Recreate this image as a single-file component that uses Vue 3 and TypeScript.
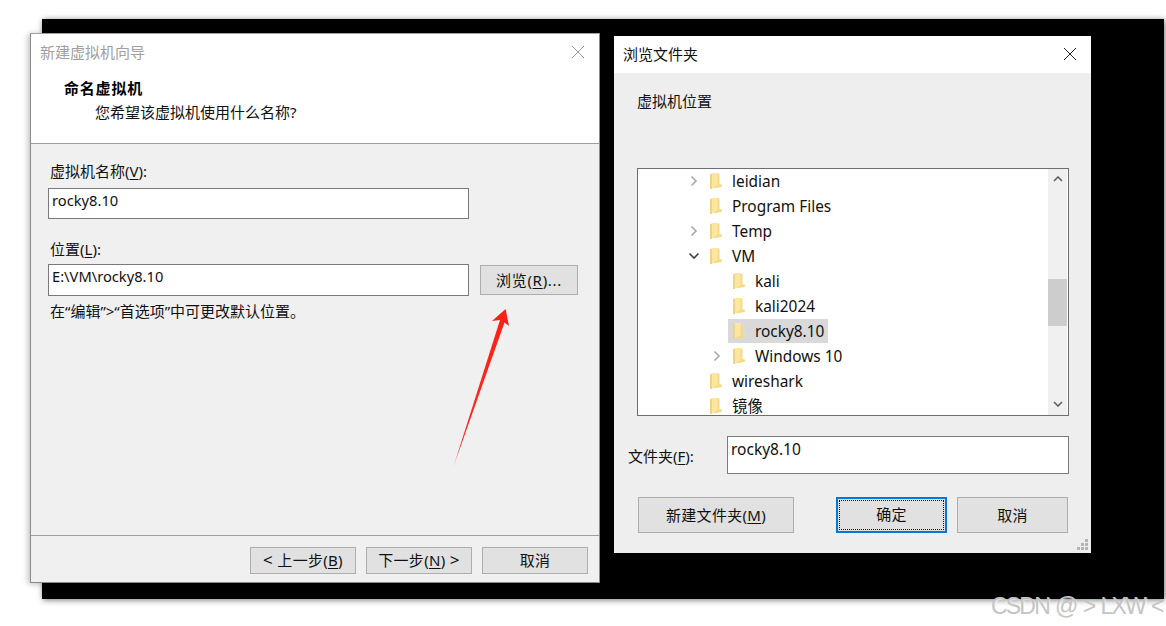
<script setup lang="ts">
interface Row { label: string; level: number; arrow?: 'right' | 'down'; selected?: boolean }
const rows: Row[] = [
  { label: 'leidian', level: 0, arrow: 'right' },
  { label: 'Program Files', level: 0 },
  { label: 'Temp', level: 0, arrow: 'right' },
  { label: 'VM', level: 0, arrow: 'down' },
  { label: 'kali', level: 1 },
  { label: 'kali2024', level: 1 },
  { label: 'rocky8.10', level: 1, selected: true },
  { label: 'Windows 10', level: 1, arrow: 'right' },
  { label: 'wireshark', level: 0 },
  { label: '镜像', level: 0 },
]
const indent = (level: number) => ({ paddingLeft: `${48 + level * 23}px` })
</script>

<template>
  <div class="canvas">
    <div class="backdrop"></div>

    <section class="win wizard">
      <header class="wz-head">
        <div class="wz-title">
          <span>新建虚拟机向导</span>
          <svg class="wz-close" width="14" height="14" viewBox="0 0 14 14"><path d="M1 1l12 12M13 1L1 13" stroke="#9a9a9a" fill="none" /></svg>
        </div>
        <h1>命名虚拟机</h1>
        <p>您希望该虚拟机使用什么名称?</p>
      </header>
      <div class="wz-body">
        <label class="wz-label first">虚拟机名称(<u>V</u>):</label>
        <div class="field">rocky8.10</div>
        <label class="wz-label second">位置(<u>L</u>):</label>
        <div class="loc-row">
          <div class="field loc">E:\VM\rocky8.10</div>
          <button class="btn browse">浏览(<u>R</u>)...</button>
        </div>
        <p class="hint">在“编辑”&gt;“首选项”中可更改默认位置。</p>
      </div>
      <footer class="wz-foot">
        <button class="btn"><span class="lt">&lt;</span> 上一步(<u>B</u>)</button>
        <button class="btn">下一步(<u>N</u>) <span class="lt">&gt;</span></button>
        <button class="btn">取消</button>
      </footer>
    </section>

    <section class="win browser">
      <header class="br-head">
        <span>浏览文件夹</span>
        <svg class="br-close" width="14" height="14" viewBox="0 0 14 14"><path d="M1 1l12 12M13 1L1 13" stroke="#222" fill="none" /></svg>
      </header>
      <div class="br-body">
        <p class="br-desc">虚拟机位置</p>
        <div class="tree">
          <ul class="tree-list">
            <li v-for="r in rows" :key="r.label" class="row" :style="indent(r.level)">
              <span class="arrow">
                <svg v-if="r.arrow === 'right'" width="10" height="12" viewBox="0 0 10 12"><path d="M2.5 1.5L7 6l-4.500 4.500" stroke="#a8a8a8" stroke-width="1.6" fill="none" /></svg>
                <svg v-else-if="r.arrow === 'down'" width="12" height="10" viewBox="0 0 12 10"><path d="M1.5 2.500L6 7l4.500-4.500" stroke="#404040" stroke-width="1.6" fill="none" /></svg>
              </span>
              <span class="item" :class="{ selected: r.selected }">
                <svg class="folder" width="13" height="18" viewBox="0 0 13 18">
                  <path d="M1 2.500L3 1.500V17L1 16.500z" fill="#e9c566" />
                  <path d="M2.500 1H9V12.500H13V14.500L2.500 16z" fill="#fbe7a2" />
                  <path d="M8.500 1.500H10.500V12.500H12.500V15L3 16.500L8.500 13z" fill="#f7d984" />
                  <path d="M1 3H2.600V16.500H1z" fill="#f2d27c" />
                </svg>
                <span class="row-label">{{ r.label }}</span>
              </span>
            </li>
          </ul>
          <div class="scrollbar">
            <svg class="sb-arrow" width="10" height="6" viewBox="0 0 10 6"><path d="M1 5l4-4 4 4" stroke="#606060" stroke-width="1.6" fill="none" /></svg>
            <div class="thumb"></div>
            <svg class="sb-arrow down" width="10" height="6" viewBox="0 0 10 6"><path d="M1 1l4 4 4-4" stroke="#606060" stroke-width="1.6" fill="none" /></svg>
          </div>
        </div>
        <div class="folder-row">
          <label>文件夹(<u>F</u>):</label>
          <div class="folder-input">rocky8.10</div>
        </div>
        <div class="br-actions">
          <button class="btn new">新建文件夹(<u>M</u>)</button>
          <button class="btn ok"><span>确定</span></button>
          <button class="btn cancel">取消</button>
        </div>
        <svg class="grip" width="12" height="12" viewBox="0 0 12 12" fill="#b4b4b4">
          <rect x="8" y="0" width="3" height="3" /><rect x="4" y="4" width="3" height="3" /><rect x="8" y="4" width="3" height="3" />
          <rect x="0" y="8" width="3" height="3" /><rect x="4" y="8" width="3" height="3" /><rect x="8" y="8" width="3" height="3" />
        </svg>
      </div>
    </section>

    <svg class="arrow-mark" width="70" height="170" viewBox="0 0 70 170">
      <defs>
        <linearGradient id="tail" x1="0" y1="1" x2="0.8" y2="0">
          <stop offset="0" stop-color="#ff2a1f" stop-opacity="0.4" />
          <stop offset="0.15" stop-color="#ff2a1f" />
          <stop offset="1" stop-color="#ff2015" />
        </linearGradient>
      </defs>
      <path d="M55.600 2L59 19L54.500 15.500L3 161L50 13L42 14z" fill="url(#tail)" />
    </svg>

    <div class="watermark">CSDN @ &gt; LXW &lt;</div>
  </div>
</template>

<style>
html, body { margin: 0; background: #fff; overflow: hidden; }
</style>

<style scoped>
.canvas {
  position: relative;
  width: 1166px;
  height: 626px;
  overflow: hidden;
  background: #fff;
  font-family: "Noto Sans", "Noto Sans CJK SC", sans-serif;
  font-size: 15px;
  color: #111;
}
.backdrop {
  position: absolute;
  left: 42px;
  top: 19px;
  width: 1122px;
  height: 580px;
  background: #000;
  box-shadow: 1px 1px 6px rgba(0, 0, 0, 0.55);
}
.win {
  position: absolute;
  box-sizing: border-box;
  display: flex;
  flex-direction: column;
  background: #f0f0f0;
}
.wizard {
  left: 30px;
  top: 33px;
  width: 570px;
  height: 550px;
  border: 1px solid #8a8a8a;
  border-top-color: #a0a0a0;
  box-shadow: -2px 1px 6px rgba(0, 0, 0, 0.25);
}
.wz-head {
  height: 110px;
  flex: none;
  box-sizing: border-box;
  background: #fff;
  border-bottom: 1px solid #a0a0a0;
}
.wz-title {
  display: flex;
  align-items: center;
  justify-content: space-between;
  height: 36px;
  padding: 0 14px 0 9px;
  color: #a0a0a0;
  line-height: 36px;
}
h1 {
  margin: 6px 0 0 33px;
  font-size: 15px;
  font-weight: 700;
  line-height: 24px;
  letter-spacing: 0.8px;
  color: #000;
}
.wz-head p {
  margin: 0 0 0 64px;
  line-height: 24px;
  color: #111;
}
.wz-body {
  flex: 1;
  padding: 0 20px 0 17px;
}
.wz-label {
  display: block;
  padding-left: 2px;
  line-height: 20px;
  color: #111;
}
.wz-label.first { margin-top: 17px; }
.wz-label.second { margin-top: 20px; }
u { text-underline-offset: 2px; }
.field {
  box-sizing: border-box;
  flex: none;
  width: 421px;
  height: 31px;
  margin-top: 7px;
  padding: 0 3px;
  background: #fff;
  border: 1px solid #7a7a7a;
  font-size: 14.700px;
  line-height: 22px;
  color: #111;
}
.loc-row {
  display: flex;
  align-items: center;
  gap: 11px;
  margin-top: 5px;
}
.loc-row .field { margin-top: 0; }
.field.loc { height: 32px; }
.btn {
  box-sizing: border-box;
  height: 27px;
  padding: 0 0 1px;
  background: #e1e1e1;
  border: 1px solid #adadad;
  font: inherit;
  font-size: 15px;
  line-height: 24px;
  letter-spacing: 0.3px;
  color: #111;
  white-space: nowrap;
}
.browse { width: 98px; height: 30px; padding: 0; letter-spacing: 0.7px; }
.hint {
  margin: 5px 0 0 2px;
  font-size: 15px;
  line-height: 20px;
  color: #111;
}
.wz-foot {
  height: 47px;
  flex: none;
  box-sizing: border-box;
  display: flex;
  justify-content: flex-end;
  gap: 10px;
  padding: 11px 11px 0 0;
  border-top: 1px solid #a0a0a0;
}
.wz-foot .btn { width: 106px; }
.lt { font-size: 17px; }

.browser {
  left: 614px;
  top: 36px;
  width: 477px;
  height: 517px;
  background: #eee;
}
.br-head {
  height: 37px;
  flex: none;
  box-sizing: border-box;
  display: flex;
  align-items: center;
  justify-content: space-between;
  padding: 0 14px 3px 9px;
  background: #fff;
  color: #111;
}
.br-close { margin-top: 2px; }
.br-body {
  position: relative;
  flex: 1;
  padding: 0 22px 0 23px;
}
.br-desc {
  margin: 0;
  height: 95px;
  padding-top: 16px;
  box-sizing: border-box;
  line-height: 24px;
  color: #111;
}
.tree {
  box-sizing: border-box;
  width: 432px;
  height: 248px;
  display: flex;
  background: #fff;
  border: 1px solid #6e6e6e;
}
.tree-list {
  flex: 1;
  margin: 0;
  padding: 0;
  list-style: none;
  overflow: hidden;
}
.row {
  display: flex;
  align-items: flex-start;
  height: 25px;
}
.arrow {
  width: 15px;
  height: 24px;
  margin-right: 4px;
  display: flex;
  align-items: center;
  justify-content: center;
  flex: none;
}
.item {
  display: flex;
  align-items: center;
  height: 24px;
  padding: 0 4px;
}
.item.selected { background: #d9d9d9; }
.folder { flex: none; margin-right: 10px; }
.row-label {
  line-height: 23px;
  font-size: 15.400px;
  color: #111;
}
.scrollbar {
  position: relative;
  width: 19px;
  margin-right: 1px;
  flex: none;
  background: #f0f0f0;
}
.sb-arrow {
  position: absolute;
  left: 5px;
  top: 7px;
}
.sb-arrow.down { top: auto; bottom: 8px; }
.thumb {
  position: absolute;
  left: 0;
  right: 0;
  top: 110px;
  height: 47px;
  background: #cdcdcd;
}
.folder-row {
  display: flex;
  align-items: center;
  margin: 20px 0 0 -9px;
}
.folder-row label {
  width: 99px;
  flex: none;
  color: #111;
}
.folder-input {
  box-sizing: border-box;
  width: 342px;
  height: 38px;
  padding: 0 3px;
  background: #fff;
  border: 1px solid #7a7a7a;
  font-size: 15.500px;
  line-height: 24px;
  color: #111;
}
.br-actions {
  display: flex;
  margin: 23px 0 0 1px;
}
.br-actions .btn { height: 36px; }
.new { width: 156px; }
.btn.ok {
  width: 111px;
  margin-left: 42px;
  border: 2px solid #0078d7;
  padding: 1px;
}
.ok span {
  display: block;
  height: 100%;
  box-sizing: border-box;
  border: 1px dotted #111;
  line-height: 26px;
}
.cancel { width: 111px; margin-left: 10px; }
.grip {
  position: absolute;
  right: 2px;
  bottom: 2px;
}
.arrow-mark {
  position: absolute;
  left: 450px;
  top: 307px;
}
.watermark {
  position: absolute;
  left: 991px;
  top: 592px;
  font-family: "Liberation Sans", Arial, sans-serif;
  font-size: 23px;
  line-height: 28px;
  letter-spacing: -1.800px;
  word-spacing: 1.500px;
  color: #c4c4c4;
  text-shadow: 1px 1px 1px rgba(255, 255, 255, 0.6);
  white-space: nowrap;
}
</style>
